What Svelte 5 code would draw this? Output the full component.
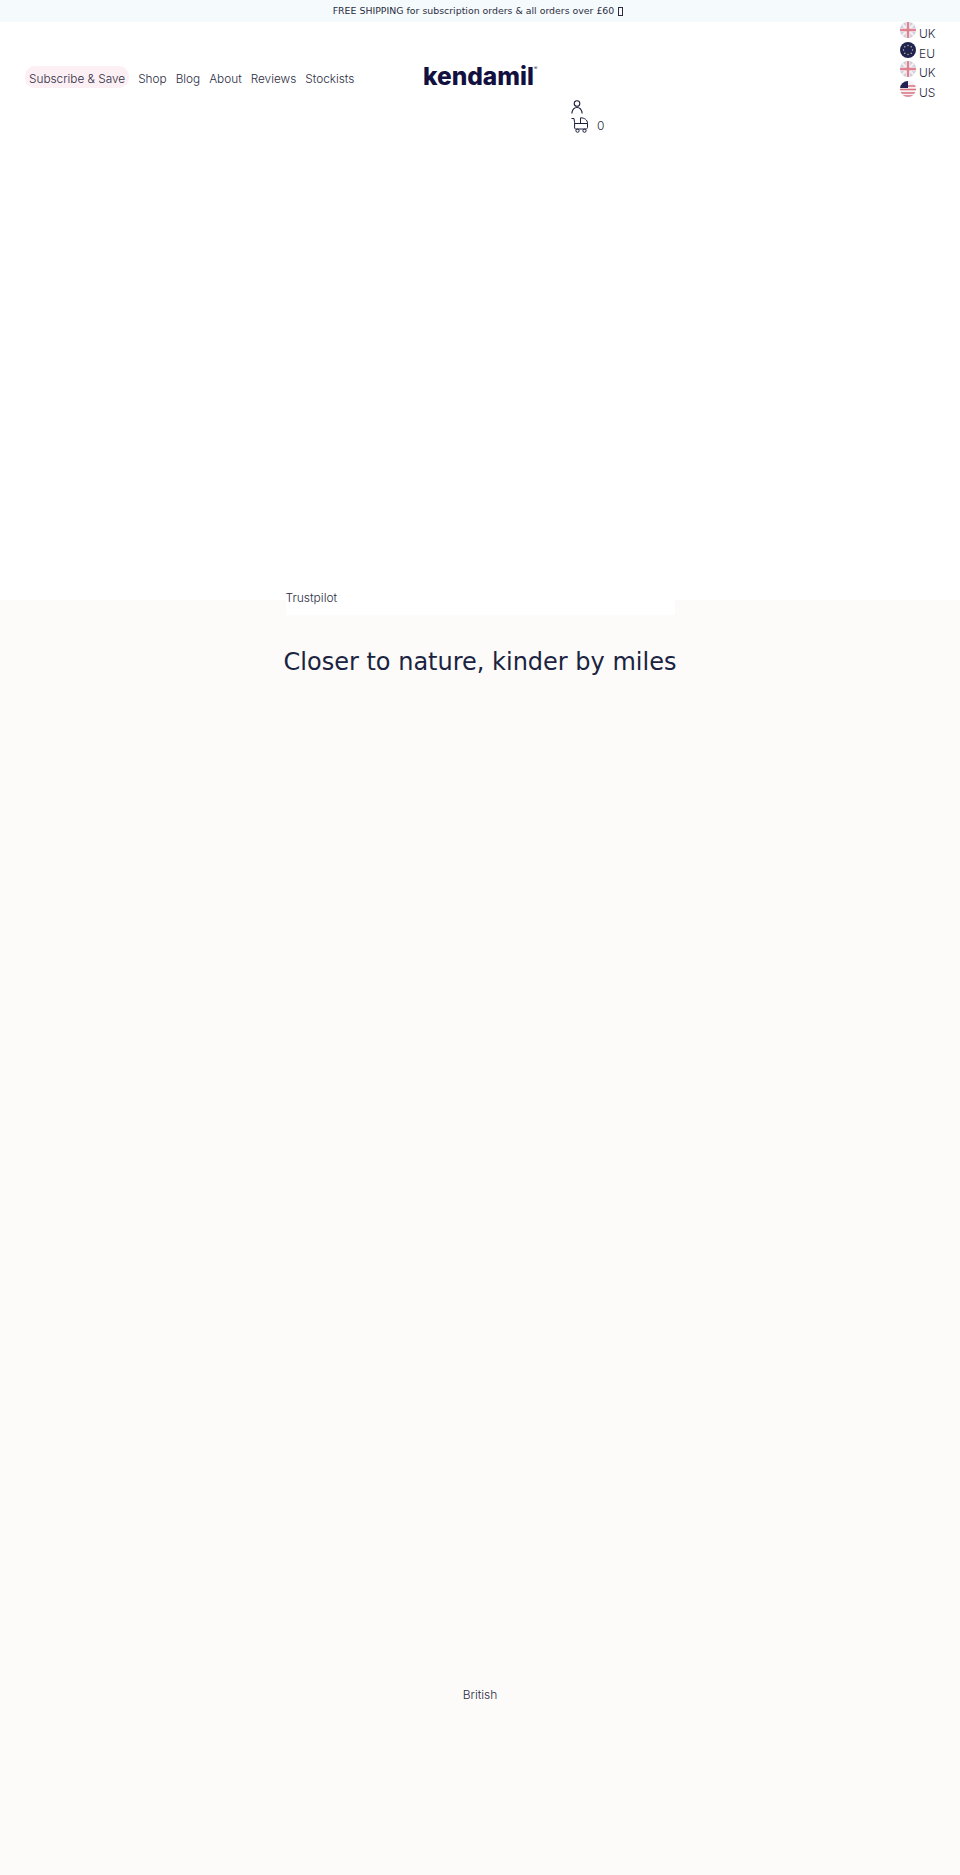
<script>
  const links = ['Shop', 'Blog', 'About', 'Reviews', 'Stockists'];
  const regions = ['uk', 'eu', 'uk', 'us'];
  const stars = [0, 45, 90, 135, 180, 225, 270, 315];
</script>

<div class="banner">FREE SHIPPING for subscription orders &amp; all orders over £60 <span class="tofu"></span></div>

<section class="hero">
  <header>
    <nav>
      <a class="pill" href="#s">Subscribe &amp; Save</a>
      {#each links as l}<a href="#s">{l}</a>{/each}
    </nav>
    <div class="logo">kendamil<sup>®</sup></div>
    <div class="tools">
      <svg class="user" viewBox="0 0 12 14" width="12" height="14" fill="none" stroke="#1a1f3a" stroke-width="1.1">
        <circle cx="6" cy="3.500" r="2.800" />
        <path d="M.8 13.500c.4-3.200 2.400-6 5.200-6s4.800 2.800 5.200 6" />
      </svg>
      <div class="cart">
        <svg viewBox="0 0 18 16" width="18" height="16" fill="none" stroke="#1a1f3a" stroke-width="1">
          <path d="M.5 1.500h2.500l.6 4v5.500c0 .6.400 1 1 1h10.400c.8 0 1.500-.7 1.500-1.500V6.500H3.600" />
          <path d="M9.500 6.500V.8c4 0 7 2 7 5.700" />
          <circle cx="6.500" cy="13.700" r="1.600" />
          <circle cx="13.500" cy="13.700" r="1.600" />
        </svg>
        <span>0</span>
      </div>
    </div>
    <ul class="regions">
      {#each regions as r}
        <li>
          <svg viewBox="0 0 16 16" width="16" height="16">
            <defs><clipPath id="c"><circle cx="8" cy="8" r="8" /></clipPath></defs>
            <g clip-path="url(#c)">
              {#if r === 'uk'}
                <rect width="16" height="16" fill="#c9cad8" />
                <path d="M0 0l16 16M16 0L0 16" stroke="#f0eef2" stroke-width="2.400" />
                <path d="M8 0v16M0 8h16" stroke="#f4f2f4" stroke-width="4.400" />
                <path d="M8 0v16M0 8h16" stroke="#df8290" stroke-width="2.400" />
              {:else if r === 'eu'}
                <rect width="16" height="16" fill="#20224f" />
                {#each stars as a}
                  <circle cx="8" cy="3.500" r=".7" fill="#c9c6a0" transform="rotate({a} 8 8)" />
                {/each}
              {:else}
                <rect width="16" height="16" fill="#f4f2f4" />
                <path d="M0 5h16M0 8.500h16M0 12h16M0 15h16" stroke="#dc6f80" stroke-width="1.600" />
                <path d="M0 0h8v7H0z" fill="#20224f" />
              {/if}
            </g>
          </svg>
          <span>{r.toUpperCase()}</span>
        </li>
      {/each}
    </ul>
  </header>
</section>

<div class="trust">Trustpilot</div>

<h2>Closer to nature, kinder by miles</h2>

<p class="british">British</p>

<style>
  :global(body) {
    margin: 0;
    background: #fcfbf9;
  }
  .banner {
    height: 22px;
    background: #f5fafd;
    text-align: center;
    font: 9.400px/22px "DejaVu Sans", sans-serif;
    color: #2b2d3f;
  }
  .tofu {
    display: inline-block;
    box-sizing: border-box;
    width: 5px;
    height: 9px;
    margin: 0 4px 0 1px;
    border: 1px solid #2b2d3f;
    vertical-align: -2px;
  }
  .hero {
    height: 578px;
    background: #fff;
  }
  header {
    display: flex;
    align-items: flex-start;
    padding-left: 25px;
    font-family: Inter, sans-serif;
    color: #2b2d3f;
  }
  nav {
    display: flex;
    align-items: baseline;
    gap: 9px;
    margin-top: 44px;
    font-size: 11.800px;
    font-weight: 300;
    width: 398px;
  }
  nav a {
    color: inherit;
    text-decoration: none;
  }
  .pill {
    background: #fdf0f5;
    border-radius: 10px;
    padding: 5px 4px 1px;
    height: 16px;
    line-height: 16px;
  }
  .logo {
    width: 113px;
    margin-top: 38px;
    font-size: 24.500px;
    line-height: 32px;
    font-weight: 800;
    color: #12103f;
    white-space: nowrap;
  }
  .logo sup {
    font-size: 5px;
    font-weight: 400;
    vertical-align: 15px;
    line-height: 0;
  }
  .tools {
    margin: 78px 0 0 35px;
    width: 329px;
  }
  .user {
    display: block;
  }
  .cart {
    display: flex;
    align-items: center;
    gap: 8px;
    margin-top: 3px;
    font-size: 12px;
    font-weight: 300;
  }
  .regions {
    list-style: none;
    margin: 0;
    padding: 0;
    font-size: 12px;
    font-weight: 300;
  }
  .regions li {
    display: flex;
    align-items: flex-start;
    gap: 3px;
    height: 19.500px;
  }
  .regions span {
    margin-top: 4px;
    line-height: 16px;
  }
  .trust {
    width: 389px;
    height: 27px;
    margin: -12px auto 0;
    background: #fff;
    font: 300 12px/20px Inter, sans-serif;
    color: #2b2d3f;
  }
  h2 {
    margin: 30px 0 0;
    text-align: center;
    font: 400 24px/34px "DejaVu Sans", sans-serif;
    color: #1a2340;
  }
  .british {
    margin: 1006px 0 0;
    text-align: center;
    font: 300 12px/20px Inter, sans-serif;
    color: #2b2d3f;
  }
</style>
